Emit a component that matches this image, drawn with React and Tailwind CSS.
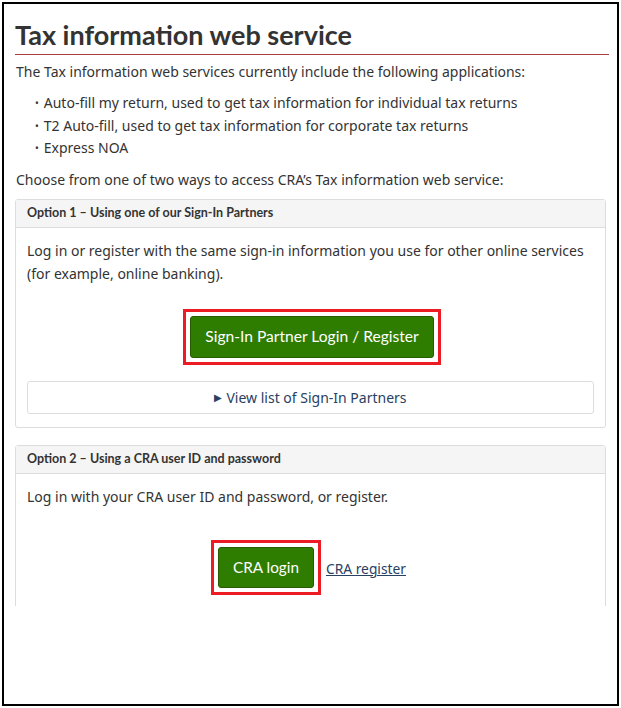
import React from "react";

const body = "font-['Noto_Sans',sans-serif]";
const lato = "font-['Lato',sans-serif]";

function Panel({title, children}) {
    return (
        <section className="mx-[11px] border border-[#dddddd] rounded-[3px]">
            <div className={`h-[28px] flex items-center px-[11px] bg-[#f5f5f5] border-b border-[#dddddd] text-[12.5px] font-bold text-[#333333] ${lato}`}>
                {title}
            </div>
            <div className="px-[11px]">{children}</div>
        </section>
    );
}

export default function App() {
    const apps = [
        "Auto-fill my return, used to get tax information for individual tax returns",
        "T2 Auto-fill, used to get tax information for corporate tax returns",
        "Express NOA",
    ];

    return (
        <div className="w-[621px] h-[708px] bg-white p-[2px]">
            <div className="h-[704px] border-2 border-black bg-white">
                <div className={`h-[602px] overflow-hidden text-[#333333] ${body}`}>
                    <div className="mx-[11px] mt-[15px] mr-[8px]">
                        <h1 className={`pb-[3px] text-[27px] leading-[32px] font-bold text-[#333333] ${lato}`}>
                            Tax information web service
                        </h1>
                        <div className="h-px bg-[#af3c43]" />
                    </div>
                    <p className="mx-[12px] mt-[6px] text-[14px] leading-[22px]">
                        The Tax information web services currently include the following applications:
                    </p>
                    <ul className="mx-[12px] mt-[9px] pl-[19px] text-[14px] leading-[22.5px]">
                        {apps.map((a) => (
                            <li key={a} className="flex gap-[5px]">
                                <span className="text-[10px]">•</span>
                                <span>{a}</span>
                            </li>
                        ))}
                    </ul>
                    <p className="mx-[12px] mt-[9px] mb-[8px] text-[14px] leading-[22px]">
                        Choose from one of two ways to access CRA’s Tax information web service:
                    </p>

                    <Panel title="Option 1 – Using one of our Sign-In Partners">
                        <p className="pt-[11px] text-[14px] leading-[23px]">
                            Log in or register with the same sign-in information you use for other online services (for example, online banking).
                        </p>
                        <div className="mt-[24px] flex justify-center pl-[3px]">
                            <div className="border-[3px] border-[#ed1c24] p-[4px]">
                                <button className={`h-[42px] px-[14px] rounded-[3px] bg-[#2e7d00] border border-[#255d00] text-white text-[15.6px] ${lato}`}>
                                    Sign-In Partner Login / Register
                                </button>
                            </div>
                        </div>
                        <div className="mt-[16px] mb-[13px] h-[33px] flex items-center justify-center border border-[#dddddd] rounded-[3px] text-[14px] text-[#284162]">
                            <span className="text-[10px] mr-[4px]">▶</span>View list of Sign-In Partners
                        </div>
                    </Panel>

                    <div className="h-[17px]" />

                    <Panel title="Option 2 – Using a CRA user ID and password">
                        <p className="pt-[11px] text-[14px] leading-[23px]">
                            Log in with your CRA user ID and password, or register.
                        </p>
                        <div className="mt-[32px] flex items-end justify-center gap-[5px] pr-[4px]">
                            <div className="border-[3px] border-[#ed1c24] p-[4px]">
                                <button className={`h-[41px] px-[14px] rounded-[3px] bg-[#2e7d00] border border-[#255d00] text-white text-[15.3px] ${lato}`}>
                                    CRA login
                                </button>
                            </div>
                            <a href="#" className="mb-[15px] text-[13.8px] text-[#284162] underline">CRA register</a>
                        </div>
                        <div className="h-[40px]" />
                    </Panel>
                </div>
            </div>
        </div>
    );
}
